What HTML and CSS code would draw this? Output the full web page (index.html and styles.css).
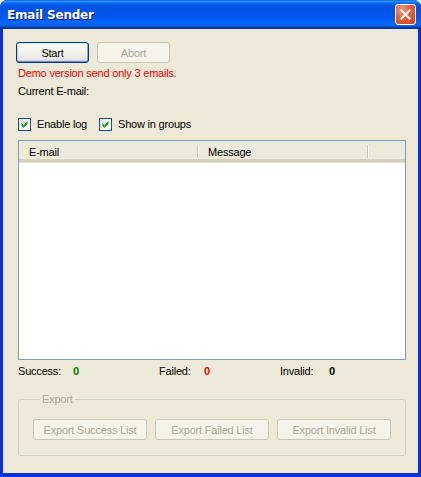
FILE: index.html
```html
<!DOCTYPE html>
<html lang="en">

<head>
    <meta charset="UTF-8">
    <meta name="viewport" content="width=device-width, initial-scale=1.0">
    <title>Email Sender</title>
    <link rel="stylesheet" href="styles.css">
</head>

<body>

    <div class="window">
        <div class="titlebar">
            <span class="title">Email Sender</span>
            <button class="close" title="Close">
                <svg width="11" height="11" viewBox="0 0 11 11">
                    <path d="M1.5 1.5 L9.5 9.5 M9.5 1.5 L1.5 9.5" stroke="#fff" stroke-width="2.2" stroke-linecap="square"/>
                </svg>
            </button>
        </div>

        <div class="client">
            <div class="btn-row">
                <button class="xp-btn default">Start</button>
                <button class="xp-btn" disabled>Abort</button>
            </div>

            <div class="notice">Demo version send only 3 emails.</div>
            <div class="current">Current E-mail:</div>

            <div class="options">
                <label class="option opt-log">
                    <span class="check">
                        <svg width="7" height="7" viewBox="0 0 7 7">
                            <path d="M0.5 2.5 L2.5 4.5 L6.5 0.5 M0.5 3.5 L2.5 5.5 L6.5 1.5 M0.5 4.5 L2.5 6.5 L6.5 2.5" stroke="#21A121" stroke-width="1" fill="none"/>
                        </svg>
                    </span>
                    Enable log
                </label>
                <label class="option">
                    <span class="check">
                        <svg width="7" height="7" viewBox="0 0 7 7">
                            <path d="M0.5 2.5 L2.5 4.5 L6.5 0.5 M0.5 3.5 L2.5 5.5 L6.5 1.5 M0.5 4.5 L2.5 6.5 L6.5 2.5" stroke="#21A121" stroke-width="1" fill="none"/>
                        </svg>
                    </span>
                    Show in groups
                </label>
            </div>

            <div class="list">
                <div class="list-head">
                    <div class="col col-email">E-mail</div>
                    <div class="col col-msg">Message</div>
                    <div class="col col-rest"></div>
                </div>
                <div class="list-body"></div>
            </div>

            <div class="stats">
                <div class="stat stat-success">
                    <span class="stat-label">Success:</span>
                    <span class="stat-value ok">0</span>
                </div>
                <div class="stat stat-failed">
                    <span class="stat-label">Failed:</span>
                    <span class="stat-value bad">0</span>
                </div>
                <div class="stat stat-invalid">
                    <span class="stat-label">Invalid:</span>
                    <span class="stat-value">0</span>
                </div>
            </div>

            <fieldset class="group" disabled>
                <legend>Export</legend>
                <div class="export-row">
                    <button class="xp-btn wide" disabled>Export Success List</button>
                    <button class="xp-btn wide" disabled>Export Failed List</button>
                    <button class="xp-btn wide" disabled>Export Invalid List</button>
                </div>
            </fieldset>
        </div>
    </div>

</body>

</html>
```

FILE: styles.css
```css
* {
    box-sizing: border-box;
}

body {
    margin: 0;
    background: #fff;
    font-family: "Liberation Sans", Arial, sans-serif;
    font-size: 11px;
    line-height: 13px;
    letter-spacing: -0.2px;
    color: #000;
}

.window {
    width: 421px;
    height: 477px;
    display: flex;
    flex-direction: column;
    background: #0831D9;
    border-radius: 7px 7px 0 0;
    overflow: hidden;
}

.titlebar {
    height: 29px;
    flex: none;
    display: flex;
    align-items: center;
    justify-content: space-between;
    padding: 0 5px 0 7px;
    background: linear-gradient(to bottom,
        #0058EE 0%, #3593FF 4%, #288EFF 6%, #127DFF 8%, #036FFC 10%,
        #0262EE 14%, #0057E5 20%, #0054E3 24%, #0055EB 56%, #005BF5 66%,
        #026AFE 76%, #0062EF 86%, #0052D6 92%, #0040AB 94%, #003092 100%);
}

.title {
    color: #fff;
    font-family: "DejaVu Sans", sans-serif;
    font-weight: bold;
    font-size: 12px;
    letter-spacing: -0.2px;
    text-shadow: 1px 1px 0 #0A1883;
    padding-top: 1px;
}

.close {
    width: 21px;
    height: 21px;
    padding: 0;
    border: 1px solid #fff;
    border-radius: 3px;
    display: flex;
    align-items: center;
    justify-content: center;
    background: radial-gradient(circle at 30% 25%, #F0977A 0%, #E2603A 45%, #CC4319 100%);
}

.client {
    flex: 1;
    margin: 0 3px 4px 3px;
    background: #ECE9D8;
    display: flex;
    flex-direction: column;
    padding: 13px 11px 0 15px;
}

.btn-row {
    display: flex;
    gap: 8px;
    margin-left: -2px;
}

.xp-btn {
    width: 73px;
    height: 21px;
    padding: 0;
    font-family: inherit;
    font-size: 11px;
    letter-spacing: -0.2px;
    color: #000;
    border: 1px solid #003C74;
    border-radius: 3px;
    background: linear-gradient(to bottom, #FFFFFF 0%, #F4F3EE 40%, #ECEBE6 80%, #D6D0C5 100%);
}

.xp-btn.default {
    box-shadow: inset 0 1px 0 #CEE7FF, inset 0 -1px 0 #6982EE, inset 1px 0 0 #B8D2F4, inset -1px 0 0 #8AA6EC;
}

.xp-btn:disabled {
    color: #ACA899;
    border-color: #C9C7BA;
    background: #F5F4EA;
    box-shadow: none;
}

.notice {
    color: #FF0000;
    margin-top: 4px;
}

.current {
    margin-top: 5px;
}

.options {
    display: flex;
    align-items: center;
    margin-top: 20px;
    height: 13px;
}

.option {
    display: flex;
    align-items: center;
    gap: 6px;
}

.opt-log {
    width: 81px;
}

.check {
    width: 13px;
    height: 13px;
    border: 1px solid #1C5180;
    background: linear-gradient(135deg, #DCDCD7 0%, #FFFFFF 80%);
    display: flex;
    align-items: center;
    justify-content: center;
}

.list {
    margin-top: 9px;
    width: 388px;
    height: 220px;
    border: 1px solid #7F9DB9;
    background: #fff;
    display: flex;
    flex-direction: column;
}

.list-head {
    height: 21px;
    display: flex;
    background: #EBEADB;
    border-bottom: 3px solid #D6D2C2;
    box-shadow: 0 1px 0 #E2DECD;
}

.col {
    padding: 5px 0 0 10px;
    position: relative;
}

.col-email {
    width: 179px;
}

.col-msg {
    width: 170px;
}

.col-rest {
    flex: 1;
}

.col-email::after,
.col-msg::after {
    content: "";
    position: absolute;
    right: 0;
    top: 4px;
    height: 13px;
    width: 1px;
    background: #C7C5B2;
    box-shadow: 1px 0 0 #fff;
}

.list-body {
    flex: 1;
}

.stats {
    display: flex;
    margin-top: 5px;
}

.stat {
    display: flex;
}

.stat-success {
    width: 141px;
}

.stat-success .stat-label {
    width: 55px;
}

.stat-failed {
    width: 121px;
}

.stat-failed .stat-label {
    width: 45px;
}

.stat-invalid .stat-label {
    width: 49px;
}

.stat-value {
    font-weight: bold;
}

.ok {
    color: #008000;
}

.bad {
    color: #FF0000;
}

.group {
    margin: 15px 0 0 0;
    width: 388px;
    padding: 13px 14px 15px 14px;
    border: 1px solid #D0D0BF;
    border-radius: 3px;
    min-width: 0;
}

.group legend {
    margin-left: 7px;
    padding: 0 2px;
    color: #ACA899;
}

.export-row {
    display: flex;
    gap: 8px;
}

.xp-btn.wide {
    width: 114px;
}
```
